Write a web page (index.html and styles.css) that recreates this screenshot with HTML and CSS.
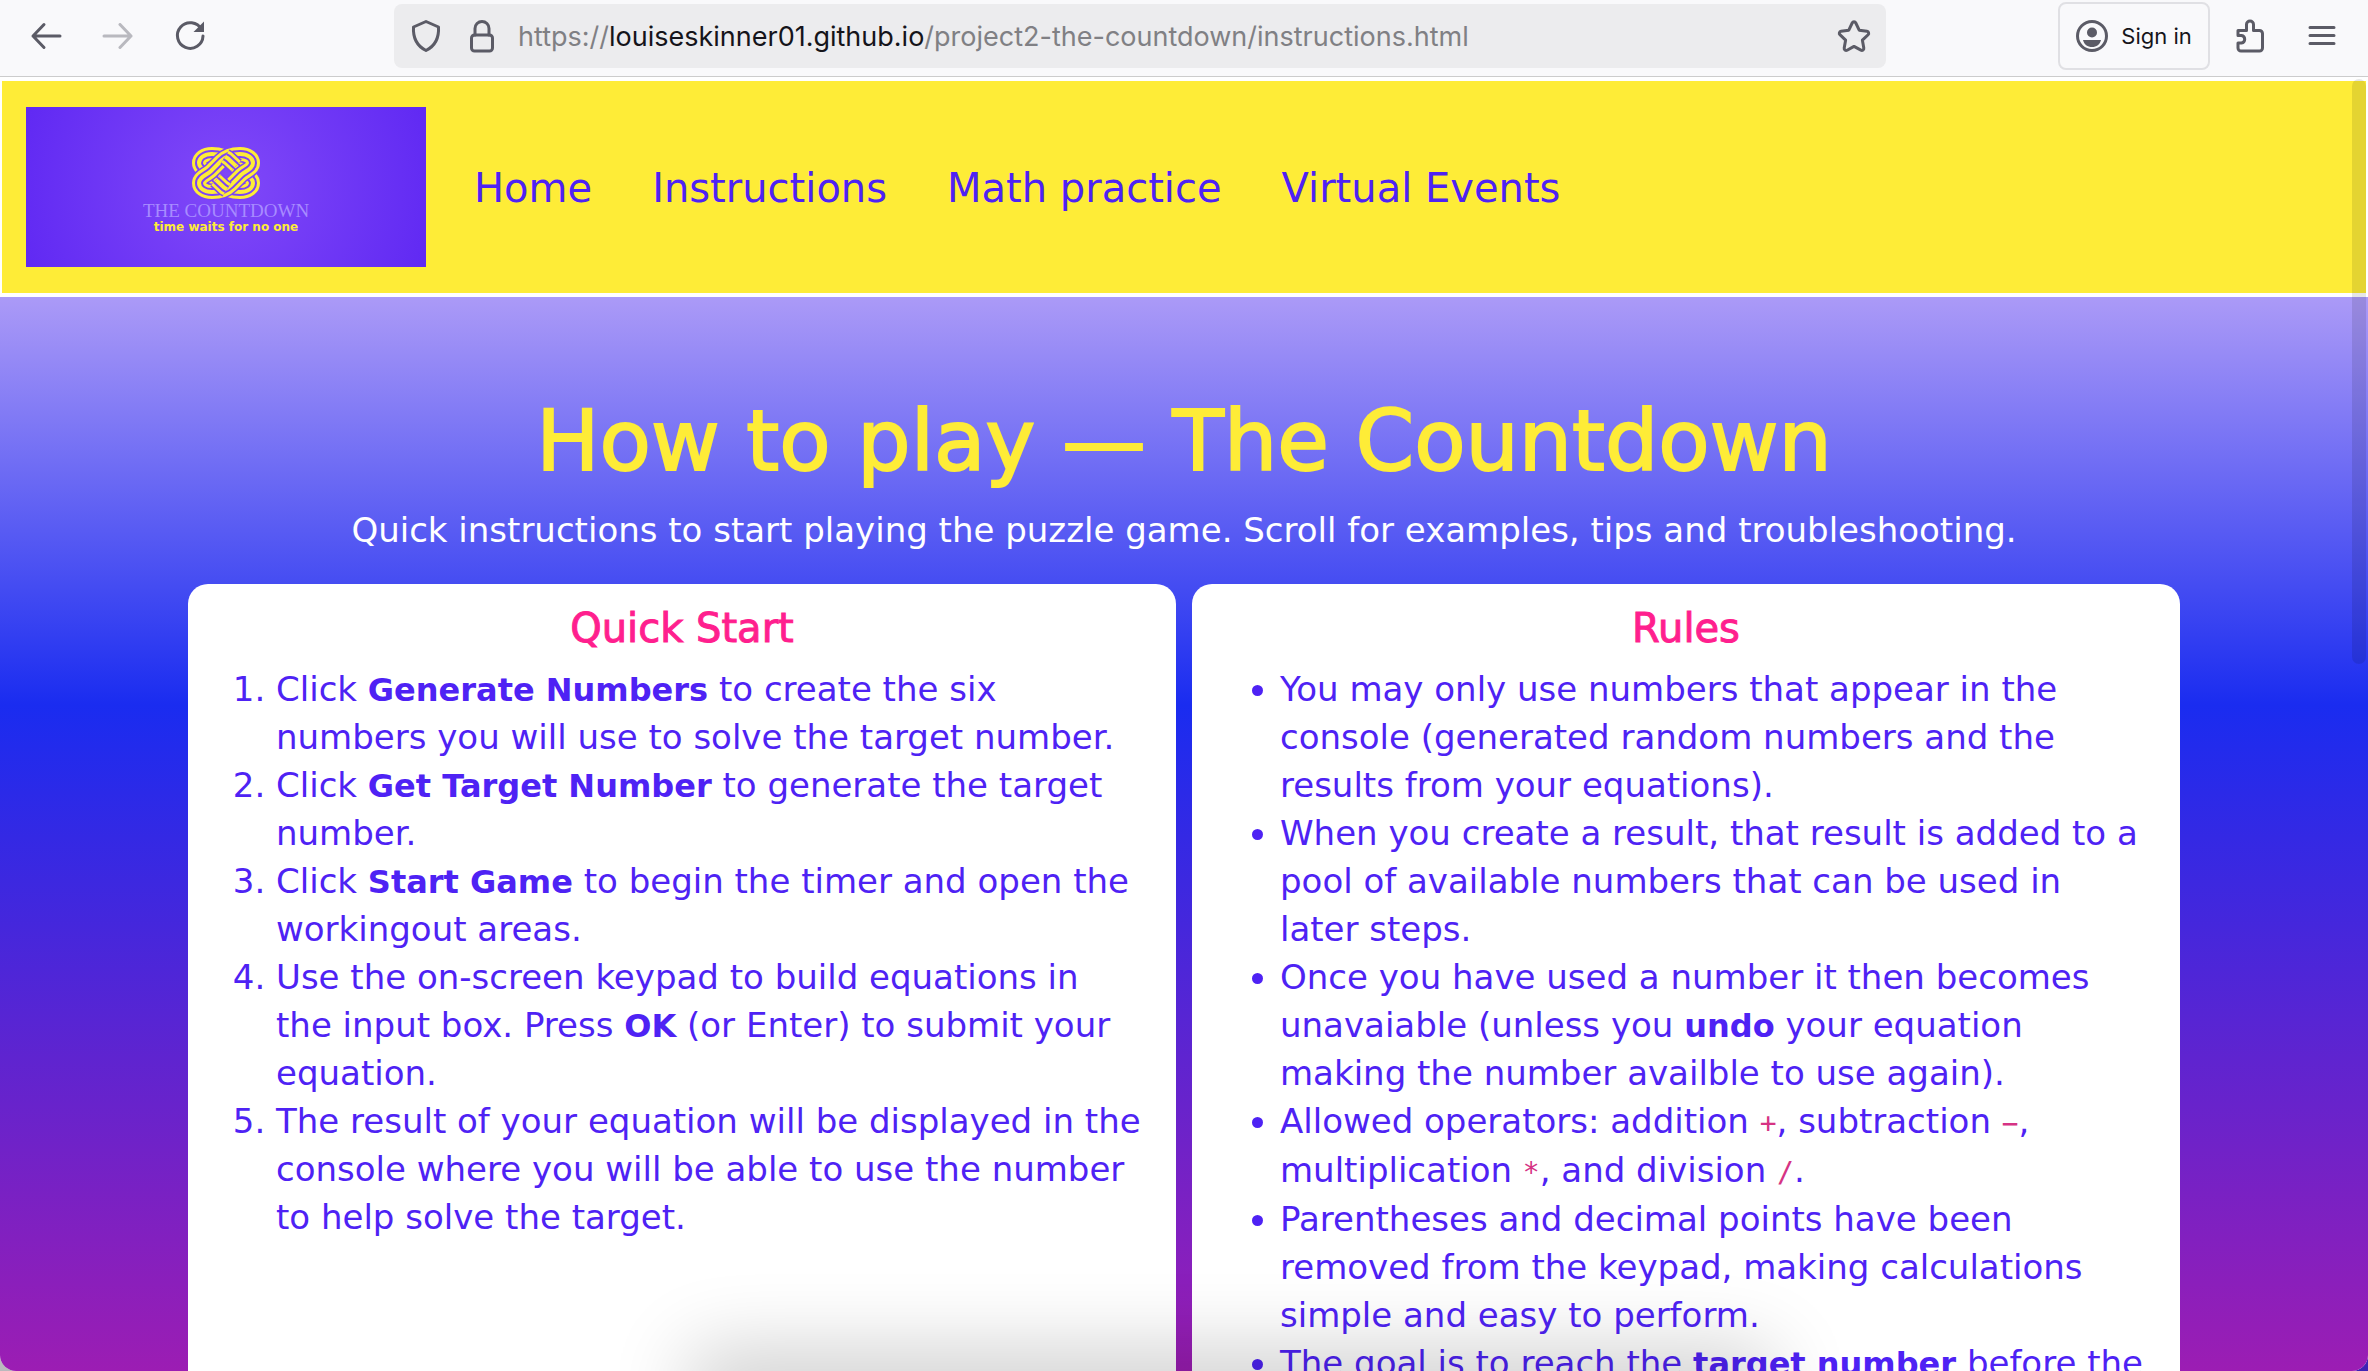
FILE: index.html
```html
<!DOCTYPE html>
<html lang="en">
<head>
<meta charset="utf-8">
<title>How to play — The Countdown</title>
<link rel="stylesheet" href="styles.css">
</head>
<body>
<div class="window">
<div class="toolbar">
  <div class="history">
    <button class="tool" aria-label="Back"><svg width="32" height="32" viewBox="0 0 32 32"><path d="M30 16H3M14 4.500 3 16l11 11.500"/></svg></button>
    <button class="tool off" aria-label="Forward"><svg width="32" height="32" viewBox="0 0 32 32"><path d="M2 16h27M18 4.500 29 16 18 27.500"/></svg></button>
    <button class="tool" aria-label="Reload"><svg width="32" height="32" viewBox="0 0 32 32"><path d="M27.500 9.500A12.800 12.800 0 1 0 29 16"/><path class="solid" d="M30 1.500V12H19.500z"/></svg></button>
  </div>
  <div class="urlbar">
    <button class="tool" aria-label="Tracking protection"><svg width="32" height="36" viewBox="0 0 32 36"><path d="M16 3.500 28.500 9c.700 12-3.500 19-12.500 23.500C7 28 2.800 21 3.500 9z"/></svg></button>
    <button class="tool" aria-label="Site security"><svg width="32" height="36" viewBox="0 0 32 36"><rect x="5.500" y="17" width="21" height="16" rx="3"/><path d="M9 17v-6.500a7 7 0 0 1 14 0V17"/></svg></button>
    <div class="url">https://<b>louiseskinner01.github.io</b>/project2-the-countdown/instructions.html</div>
    <button class="tool" aria-label="Bookmark"><svg width="36" height="36" viewBox="0 0 36 36"><path d="M16.200 5a2 2 0 0 1 3.600 0l3.400 7.200 7.800 1.100a2 2 0 0 1 1.100 3.400l-5.700 5.500 1.400 7.900a2 2 0 0 1-2.900 2.100L18 28.400l-6.900 3.800a2 2 0 0 1-2.900-2.100l1.400-7.900-5.700-5.500A2 2 0 0 1 5 13.300l7.800-1.100z"/></svg></button>
  </div>
  <div class="account">
    <button class="signin"><svg width="32" height="32" viewBox="0 0 32 32"><circle cx="16" cy="16" r="14.500"/><circle class="solid" cx="16" cy="12.500" r="5"/><path class="solid" d="M7 20h18c-1 4.500-4.500 7-9 7s-8-2.500-9-7z"/></svg>Sign in</button>
    <button class="tool" aria-label="Extensions"><svg width="32" height="36" viewBox="0 0 32 36"><path d="M4 12.500h8.500V6.500a3.500 3.500 0 0 1 7 0v6h6a3 3 0 0 1 3 3V30a3 3 0 0 1-3 3H7a3 3 0 0 1-3-3v-5h3.500a3.800 3.800 0 0 0 0-7.500H4z"/></svg></button>
    <button class="tool" aria-label="Menu"><svg width="32" height="32" viewBox="0 0 32 32"><path d="M4 7.500h24M4 15.500h24M4 23.500h24"/></svg></button>
  </div>
</div>

<header class="site-header">
  <a class="logo" href="#" aria-label="The Countdown">
    <svg class="knot" width="68" height="56" viewBox="0 -2 68 56">
      <defs>
        <path id="loop" d="M39 14 49 24C53 28 61 30 61 36 61 41 56 45 48 45 41 45 35 44 29 38L19 28C15 24 7 22 7 16 7 11 12 7 20 7 27 7 33 8 39 14z"/>
        <path id="cross" d="M33 9.600 36 11.500 44 19M35 42.400 32 40.500 24 33"/>
      </defs>
      <g><use href="#loop" class="w4"/><use href="#loop" class="w3"/><use href="#loop" class="w2"/><use href="#loop" class="w1"/></g>
      <g transform="matrix(-1 0 0 1 68 0)"><use href="#loop" class="w4"/><use href="#loop" class="w3"/><use href="#loop" class="w2"/><use href="#loop" class="w1"/></g>
      <g><use href="#cross" class="w4"/><use href="#cross" class="w3"/><use href="#cross" class="w2"/><use href="#cross" class="w1"/></g>
    </svg>
    <span class="logo-name">THE COUNTDOWN</span>
    <span class="logo-tag">time waits for no one</span>
  </a>
  <nav>
    <a href="#">Home</a>
    <a href="#">Instructions</a>
    <a href="#">Math practice</a>
    <a href="#">Virtual Events</a>
  </nav>
</header>

<main>
  <h1>How to play — The Countdown</h1>
  <p class="lead">Quick instructions to start playing the puzzle game. Scroll for examples, tips and troubleshooting.</p>
  <div class="cards">
    <section class="card">
      <h2>Quick Start</h2>
      <ol>
        <li>Click <strong>Generate Numbers</strong> to create the six<br>numbers you will use to solve the target number.</li>
        <li>Click <strong>Get Target Number</strong> to generate the target<br>number.</li>
        <li>Click <strong>Start Game</strong> to begin the timer and open the<br>workingout areas.</li>
        <li>Use the on-screen keypad to build equations in<br>the input box. Press <strong>OK</strong> (or Enter) to submit your<br>equation.</li>
        <li>The result of your equation will be displayed in the<br>console where you will be able to use the number<br>to help solve the target.</li>
      </ol>
    </section>
    <section class="card">
      <h2>Rules</h2>
      <ul>
        <li>You may only use numbers that appear in the<br>console (generated random numbers and the<br>results from your equations).</li>
        <li>When you create a result, that result is added to a<br>pool of available numbers that can be used in<br>later steps.</li>
        <li>Once you have used a number it then becomes<br>unavaiable (unless you <strong>undo</strong> your equation<br>making the number availble to use again).</li>
        <li>Allowed operators: addition <code>+</code>, subtraction <code>−</code>,<br>multiplication <code>*</code>, and division <code>/</code>.</li>
        <li>Parentheses and decimal points have been<br>removed from the keypad, making calculations<br>simple and easy to perform.</li>
        <li>The goal is to reach the <strong>target number</strong> before the</li>
      </ul>
    </section>
  </div>
</main>
<div class="scrollbar"></div>
<div class="dock-shadow"></div>
</div>
</body>
</html>
```
FILE: styles.css
```css
* { box-sizing: border-box; }
html { background: linear-gradient(90deg, #b9b9bd 50%, #3f22b4 50%); }
body { margin: 0; height: 100vh; overflow: hidden; font: 34px/48px "DejaVu Sans", sans-serif; color: #4e22f4; }
.window { position: relative; display: flex; flex-direction: column; height: 100%; overflow: hidden; border-radius: 0 0 16px 16px; background: #fff; }
button { border: 0; background: none; padding: 0; font: inherit; color: inherit; }
svg { display: block; fill: none; stroke: #5b5b66; stroke-width: 3; stroke-linecap: round; stroke-linejoin: round; }
svg .solid { fill: #5b5b66; stroke: none; }
.off { opacity: .4; }

.toolbar { flex: none; display: flex; align-items: center; height: 77px; padding: 0 30px 4px; border-bottom: 1px solid #ccc; background: #f9f9fb; }
.history { display: flex; gap: 40px; width: 364px; }
.urlbar { flex: 1; display: flex; align-items: center; gap: 24px; height: 64px; padding: 0 14px 0 16px; border-radius: 8px; background: #ececee; }
.url { flex: 1; overflow: hidden; margin-left: -4px; padding-top: 2px; white-space: nowrap; font: 27px/40px Inter, sans-serif; color: #808084; }
.url b { font-weight: 400; color: #15141a; }
.account { display: flex; align-items: center; justify-content: flex-end; gap: 40px; width: 452px; }
.signin { display: flex; align-items: center; justify-content: center; gap: 13px; width: 152px; height: 68px; margin-right: -16px; border: 2px solid #e0e0e4; border-radius: 8px; font: 22px/32px Inter, sans-serif; color: #15141a; }

.site-header { flex: none; display: flex; align-items: center; gap: 48px; height: 220px; padding: 0 24px; border: solid #fff; border-width: 4px 2px; background: #feec37; }
.logo { display: flex; flex-direction: column; align-items: center; width: 400px; height: 160px; padding-top: 38px; background: radial-gradient(circle, #8149f8, #6029f3); text-decoration: none; white-space: nowrap; }
.knot { stroke-linecap: butt; }
.w4 { stroke: #7c43f7; stroke-width: 17; }
.w3 { stroke: #feec37; stroke-width: 14; }
.w2 { stroke: #7c43f7; stroke-width: 8; }
.w1 { stroke: #feec37; stroke-width: 4; }
.logo-name { font: 19px/20px "Liberation Serif", serif; color: #a78bff; }
.logo-tag { font: bold 12px/12px "DejaVu Sans", sans-serif; color: #feec37; }
nav { display: flex; gap: 60px; padding-top: 2px; font-size: 40px; }
nav a { color: #4e22f4; text-decoration: none; white-space: nowrap; }

main { flex: 1; min-height: 0; padding: 95px 7% 0; background: linear-gradient(#ab9af7, #1a2cf0 38%, #9c1db3); text-align: center; }
h1 { margin: 0; font-size: 84px; font-weight: 400; line-height: 98px; color: #feec37; -webkit-text-stroke: 2px #feec37; }
.lead { margin: 16px 0 30px; color: #fff; }
.cards { display: grid; grid-template-columns: repeat(2, minmax(0, 1fr)); gap: 16px; max-width: 1992px; margin: 0 auto; }
.card { padding: 20px 24px; border-radius: 20px; background: #fff; white-space: nowrap; }
h2 { margin: 0 0 13px; font-size: 40px; font-weight: 400; line-height: 48px; color: #ff1f8e; -webkit-text-stroke: 1px #ff1f8e; }
ol, ul { margin: 0; padding-left: 64px; text-align: left; }
strong { font-size: 32px; line-height: 40px; }
code { font: 28px/44px "DejaVu Sans Mono", monospace; color: #d63384; }

.scrollbar { position: absolute; top: 79px; right: 2px; width: 14px; height: 585px; border-radius: 8px; background: rgba(0, 0, 0, .1); }
.dock-shadow { position: absolute; left: 30%; right: 26%; bottom: -40px; height: 40px; box-shadow: 0 0 80px 20px rgba(0, 0, 0, .2); }
```
